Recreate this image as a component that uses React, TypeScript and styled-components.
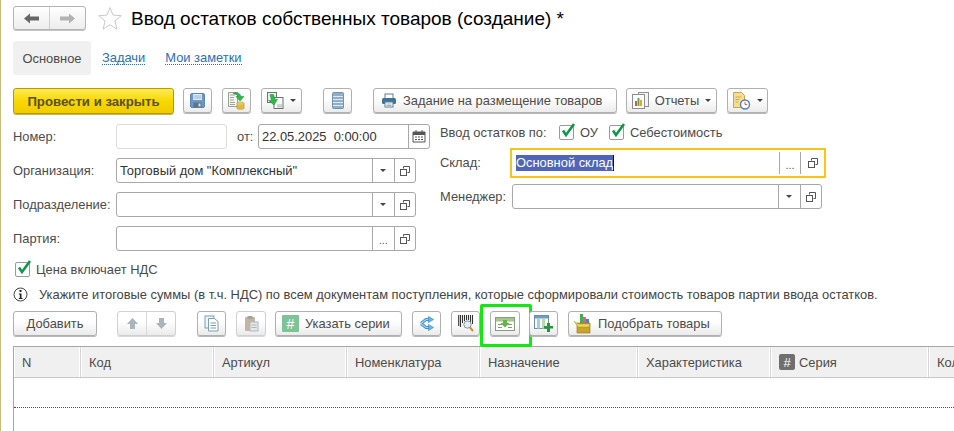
import React from "react";
import styled, { createGlobalStyle } from "styled-components";

const Global = createGlobalStyle`
  html, body { margin: 0; padding: 0; background: #fff; }
  body { font-family: "Liberation Sans", Arial, sans-serif; font-size: 12.9px; color: #4b4b4b; }
`;
const Page = styled.div`display:flex;width:954px;height:431px;overflow:hidden;background:#fff;`;
const Strip = styled.div`width:1px;flex:none;background:#c8b97c;`;
const Content = styled.div`flex:none;width:941px;padding-left:12px;padding-top:6px;box-sizing:content-box;`;
const Header = styled.div`display:flex;align-items:center;height:24px;`;
const NavGroup = styled.div`display:flex;width:73px;height:24px;box-sizing:border-box;border:1px solid #b4b4b4;border-radius:3px;background:linear-gradient(#fff,#ededed);box-shadow:0 1px 0 #c4c4c4;`;
const NavButton = styled.div<{ $sep?: boolean }>`flex:1;display:flex;align-items:center;justify-content:center;${p => p.$sep ? "border-left:1px solid #cfcfcf;" : ""}`;
const StarWrap = styled.div`margin-left:12px;width:24px;height:24px;display:flex;`;
const Title = styled.div`margin-left:9px;padding-top:1px;font-size:19px;color:#000;white-space:nowrap;line-height:24px;`;
const Tabs = styled.div`display:flex;align-items:center;height:34px;margin-top:11px;`;
const ActiveTab = styled.div`width:78px;height:34px;display:flex;align-items:center;justify-content:center;background:#f0f0f0;border-radius:3px;color:#4b4b4b;`;
const TabLink = styled.a<{ $ml: number }>`margin-left:${p => p.$ml}px;color:#2a6fb8;border-bottom:1px dotted #2a6fb8;line-height:13px;`;
const Toolbar = styled.div<{ $mt: number }>`display:flex;align-items:flex-start;height:26px;margin-top:${p => p.$mt}px;`;
const Button = styled.div<{ $w: number; $ml?: number; $off?: boolean; $pl?: number }>`
  flex:none;width:${p => p.$w}px;height:25px;margin-left:${p => p.$ml ?? 0}px;box-sizing:border-box;
  display:flex;align-items:center;justify-content:${p => p.$pl !== undefined ? "flex-start" : "center"};gap:6px;position:relative;
  padding-left:${p => p.$pl ?? 0}px;
  border:1px solid ${p => p.$off ? "#d0d0d0" : "#b0b0b0"};border-radius:3px;
  background:linear-gradient(#fff 40%,#ebebeb);box-shadow:0 1px 0 ${p => p.$off ? "#d8d8d8" : "#b8b8b8"};
  color:#4b4b4b;white-space:nowrap;
`;
const PrimaryButton = styled.div`
  flex:none;width:161px;height:26px;box-sizing:border-box;display:flex;align-items:center;justify-content:center;
  border:1px solid #b59b00;border-radius:3px;background:linear-gradient(#ffe95a,#f8d800 50%,#f0cc00);
  color:#5a5020;font-weight:bold;font-size:13.2px;box-shadow:0 1px 0 #c9b35a;
`;
const Caret = styled.span`width:0;height:0;border-left:3.5px solid transparent;border-right:3.5px solid transparent;border-top:3.5px solid #444;`;
const Form = styled.div`display:flex;margin-top:10px;`;
const LeftCol = styled.div`width:417px;flex:none;display:flex;flex-direction:column;gap:9px;`;
const RightCol = styled.div`margin-left:10px;flex:none;width:400px;display:flex;flex-direction:column;`;
const Row = styled.div`display:flex;align-items:center;height:25px;`;
const Label = styled.div<{ $w?: number; $lift?: boolean }>`flex:none;width:${p => p.$w ?? 103}px;color:#4b4b4b;white-space:nowrap;${p => p.$lift ? "margin-bottom:2px;" : ""}`;
const Field = styled.div<{ $w: number; $ml?: number; $off?: boolean; $focus?: boolean }>`
  flex:none;display:flex;align-items:stretch;box-sizing:border-box;width:${p => p.$w}px;margin-left:${p => p.$ml ?? 0}px;
  height:${p => p.$focus ? 30 : 25}px;background:#fff;border-radius:${p => p.$focus ? 0 : 3}px;
  border:${p => p.$focus ? "2px solid #f6c518" : `1px solid ${p.$off ? "#dcdcdc" : "#a8a8a8"}`};
  ${p => p.$focus ? "padding:2px 0;" : ""}
`;
const FieldText = styled.div`flex:1;display:flex;align-items:center;padding-left:3px;color:#333;white-space:pre;overflow:hidden;`;
const Selected = styled.span`margin-left:1px;background:#4f66b8;color:#fff;line-height:16px;border-right:1px solid #111;`;
const FieldBtn = styled.div<{ $w?: number }>`flex:none;width:${p => p.$w ?? 21.5}px;box-sizing:border-box;display:flex;align-items:center;justify-content:center;border-left:1px solid #a8a8a8;color:#555;`;
const Dots = styled.span`font-size:11px;line-height:11px;position:relative;top:2px;`;
const OtLabel = styled.div`margin-left:10px;width:21px;flex:none;`;
const CheckRow = styled.div`display:flex;align-items:center;height:15px;margin:1px 0 8px;`;
const CheckBox = styled.div<{ $ml?: number }>`position:relative;flex:none;width:15px;height:15px;margin-left:${p => p.$ml ?? 0}px;margin-right:6px;border:1px solid #9a9a9a;border-radius:2px;background:#fff;box-sizing:border-box;`;
const CheckMark = styled.svg`position:absolute;left:0;top:-4px;`;
const SkladRow = styled.div`display:flex;align-items:center;height:30px;margin-bottom:6px;`;
const ManagerRow = styled.div`display:flex;align-items:center;height:25px;`;
const VatRow = styled.div`display:flex;align-items:center;height:16px;margin-top:10px;padding-left:2px;`;
const InfoRow = styled.div`display:flex;align-items:center;height:16px;margin-top:9px;gap:11px;color:#444;white-space:nowrap;`;
const Pair = styled.div<{ $ml: number }>`display:flex;flex:none;width:59px;height:25px;margin-left:${p => p.$ml}px;box-sizing:border-box;border:1px solid #d0d0d0;border-radius:3px;background:linear-gradient(#fff 40%,#ebebeb);box-shadow:0 1px 0 #d8d8d8;`;
const PairPart = styled.div<{ $sep?: boolean }>`flex:1;display:flex;align-items:center;justify-content:center;${p => p.$sep ? "border-left:1px solid #d8d8d8;" : ""}`;
const Highlight = styled.div`position:absolute;left:-11px;top:-8px;width:52px;height:43px;box-sizing:border-box;border:3px solid #16e616;border-radius:2px;pointer-events:none;`;
const Table = styled.div`margin-top:9px;width:990px;border-top:1px solid #a6a6a6;border-left:1px solid #a6a6a6;height:85px;`;
const HeaderRow = styled.div`display:grid;grid-template-columns:67px 133px 133px 133px 158px 133px 158px 100px;height:31px;box-sizing:border-box;border-bottom:1px solid #c8c8c8;`;
const HeadCell = styled.div`display:flex;align-items:center;padding-left:8px;background:#f0f0f0;border-right:1px solid #d6d6d6;box-shadow:inset -1px 0 0 #fff,inset 1px 0 0 #fff;color:#4b4b4b;white-space:nowrap;gap:4px;`;
const HashBadge = styled.span`width:16px;height:16px;border-radius:2px;background:#6f6f6f;color:#fff;display:flex;align-items:center;justify-content:center;font-size:13px;`;
const GreenHash = styled.span`width:17px;height:17px;background:#7fc295;color:#fff;border-radius:1px;display:flex;align-items:center;justify-content:center;font-size:14px;`;
const BlankLine = styled.div`height:29px;border-bottom:1px dotted #e01010;`;

const Back = () => <svg width="15" height="11" viewBox="0 0 15 11"><path d="M0 5.500 6 .5v3h9v4H6v3z" fill="#666" /></svg>;
const Forward = () => <svg width="15" height="11" viewBox="0 0 15 11"><path d="M15 5.500 9 .5v3H0v4h9v3z" fill="#b2b2b2" /></svg>;
const Star = () => <svg width="24" height="24" viewBox="0 0 24 24"><path d="M12 1.500l3 7.600 8.300.6-6.400 5.300 2 8.200L12 18.800 5.100 23.200l2-8.200L.7 9.700 9 9.100z" fill="#fff" stroke="#c9c9c9" /></svg>;
const Save = () => <svg width="15" height="15" viewBox="0 0 15 15"><rect x=".5" y=".5" width="14" height="14" rx="1.500" fill="#6b98c9" stroke="#5a86b6" /><rect x="3" y="1" width="9" height="6" fill="#e3edf6" /><path d="M3.500 3h8M3.500 5h8" stroke="#8fb0d0" /><rect x="3.500" y="9.500" width="8" height="5" fill="#5e7387" /><rect x="8.500" y="10.500" width="2" height="3" fill="#d5dde5" /></svg>;
const PostIcon = () => <svg width="17" height="18" viewBox="0 0 17 18"><path d="M.5.500h9v14h-9z" fill="#f4f5ee" stroke="#9a9f92" /><path d="M2 3h5M2 5.500h4M2 8h4M2 10.500h5M2 12.500h5" stroke="#9ca39a" /><ellipse cx="12.500" cy="11.500" rx="3.500" ry="1.500" fill="#f1d35d" stroke="#b8952b" strokeWidth=".7" /><path d="M9 11.500v5c0 1 7 1 7 0v-5" fill="#eac74a" stroke="#b8952b" strokeWidth=".7" /><path d="M9 13.800h7M9 15.500h7" stroke="#c9a53a" strokeWidth=".6" /><path d="M5 1.500c4-1.500 7-.5 8 3h3l-4 4.500-4-4.500h2c-.5-1.500-2-2.500-5-3z" fill="#2eb84c" stroke="#1d8b36" strokeWidth=".5" /></svg>;
const CopyDown = () => <svg width="17" height="17" viewBox="0 0 17 17"><rect x=".5" y=".5" width="9" height="10" fill="#e8f0ea" stroke="#66766c" /><rect x="7" y="5.500" width="9" height="11" fill="#fafafa" stroke="#66766c" /><path d="M10 13h5M10 14.800h5" stroke="#a8b2ac" /><path d="M3 2.500h3.500l1.500 5h2.500L7 13 1.500 8.500l3 .0z" fill="#2eb84c" stroke="#1d8b36" strokeWidth=".5" /></svg>;
const Lines = () => <svg width="12" height="17" viewBox="0 0 12 17"><rect x=".5" y=".5" width="11" height="16" rx="1" fill="#8fb0c8" stroke="#7393aa" /><path d="M1 4.500h10M1 7.500h10M1 10.500h10M1 13.500h10" stroke="#dce7ee" /></svg>;
const Printer = () => <svg width="16" height="15" viewBox="0 0 16 15"><rect x="4" y="1" width="8" height="5" fill="#fff" stroke="#5f7f97" /><rect x="1" y="5" width="14" height="6" rx="1.500" fill="#3f7396" /><rect x="4" y="9" width="8" height="5" fill="#fff" stroke="#5f7f97" /><path d="M5.500 11h5M5.500 12.500h5" stroke="#9db0bf" /></svg>;
const Reports = () => <svg width="17" height="17" viewBox="0 0 17 17"><rect x="6.500" y=".5" width="10" height="14" fill="#f4f4f4" stroke="#8f8f8f" /><rect x=".5" y="2.500" width="12" height="14" fill="#fff" stroke="#8f8f8f" /><rect x="3" y="9" width="2" height="5" fill="#d9534f" /><rect x="5.500" y="6" width="2" height="8" fill="#4caf50" /><rect x="8" y="8" width="2" height="6" fill="#e3a82b" /></svg>;
const DocClock = () => <svg width="18" height="18" viewBox="0 0 18 18"><path d="M.5.500h8l3 3v12H.5z" fill="#f7dd92" stroke="#c7a54e" /><path d="M2.500 5h6M2.500 7.500h4M2.500 10h3" stroke="#c9ab5c" /><circle cx="12" cy="12.500" r="4.500" fill="#fff" stroke="#4f7fb5" strokeWidth="1.400" /><path d="M12 10v2.500h2" stroke="#d9534f" fill="none" /></svg>;
const Calendar = () => <svg width="14" height="13" viewBox="0 0 14 13"><path d="M1 2h12v10H1z" fill="#fff" stroke="#555" /><path d="M1 2h12v3H1z" fill="#555" /><path d="M4 0v3M10 0v3" stroke="#555" /><path d="M3 7h2M6 7h2M9 7h2M3 9.500h2M6 9.500h2M9 9.500h2" stroke="#555" /></svg>;
const OpenIcon = () => <svg width="10" height="10" viewBox="0 0 10 10" fill="none" stroke="#555"><path d="M3.500 2.500v-2h6v6h-2" /><rect x=".5" y="3.500" width="6" height="6" fill="#fff" /></svg>;
const Check = () => <CheckMark width="17" height="17" viewBox="0 0 17 17"><path d="M3 8.500l3 4.500L14 2" fill="none" stroke="#12964a" strokeWidth="2.600" /></CheckMark>;
const Info = () => <svg width="15" height="15" viewBox="0 0 15 15"><circle cx="7.500" cy="7.500" r="6.500" fill="#fff" stroke="#444" /><rect x="6.500" y="3" width="2" height="2" fill="#222" /><path d="M5.800 6.500h2.700v4.500h1v1H5.800v-1h1V7.500h-1z" fill="#222" /></svg>;
const ArrowUp = () => <svg width="13" height="13" viewBox="0 0 13 13"><path d="M6.500 1 12 7H9v5H4V7H1z" fill="#a9b4bb" /></svg>;
const ArrowDown = () => <svg width="13" height="13" viewBox="0 0 13 13"><path d="M6.500 12 12 6H9V1H4v5H1z" fill="#a9b4bb" /></svg>;
const CopyDoc = () => <svg width="15" height="17" viewBox="0 0 15 17"><rect x="1" y="1" width="9" height="12" fill="#eef5f9" stroke="#7b9fb3" /><path d="M4.500 3.500h6l3.500 3v9.500H4.500z" fill="#fff" stroke="#7b9fb3" /><path d="M6.500 8h5.500M6.500 10.500h5.500M6.500 13h5.500" stroke="#7b9fb3" /></svg>;
const Paste = () => <svg width="15" height="17" viewBox="0 0 15 17"><rect x="1" y="2" width="10" height="14" rx="1" fill="#c4b5a7" /><rect x="3.500" y="1" width="5" height="3" fill="#a9a09a" /><rect x="6" y="7" width="8" height="9" fill="#e4e8ea" stroke="#b0b6ba" /><path d="M7.500 10h5M7.500 12.500h5" stroke="#b0b6ba" /></svg>;
const Branch = () => <svg width="15" height="15" viewBox="0 0 15 15"><path d="M2 7.500 7 3.500h3M2 7.500l5 4h3" fill="none" stroke="#3f8fc8" strokeWidth="3" /><path d="M2 7.500 7 3.500h3M2 7.500l5 4h3" fill="none" stroke="#a7d3ef" strokeWidth="1.200" /><path d="M9.500 .5 14.500 3.500 9.500 6.500zM9.500 8.500l5 3-5 3z" fill="#6db4e3" stroke="#3f8fc8" strokeWidth=".7" /></svg>;
const Barcode = () => <svg width="16" height="17" viewBox="0 0 16 17"><path d="M.7 0v11M2.500 0v12M4.500 0v8M6.500 0v6M8.500 0v5M10.500 0v5M12.500 0v7M14.500 0v9" stroke="#333" strokeWidth="1.100" /><circle cx="9.500" cy="9.500" r="3.700" fill="#e3ecf2" stroke="#8a8f92" /><path d="M12 12.500 15 16" stroke="#c98f3e" strokeWidth="2" /></svg>;
const RowDown = () => <svg width="20" height="14" viewBox="0 0 20 14"><rect x=".5" y=".5" width="19" height="13" fill="#fbfdf8" stroke="#8c9a82" /><rect x="1" y="1" width="18" height="3.500" fill="#a3c98a" /><path d="M3 7.500h4M3 10.500h4M13 7.500h4M13 10.500h4" stroke="#8a948a" /><path d="M8 3h4v3h2.500L10 10.500 5.500 6H8z" fill="#66b34f" /></svg>;
const TablePlus = () => <svg width="19" height="17" viewBox="0 0 19 17"><rect x=".5" y=".5" width="14" height="13" fill="#f6fafc" stroke="#6f8fa8" /><rect x="1" y="1" width="13" height="2.500" fill="#6f9fc0" /><rect x="3" y="3.500" width="3" height="10" fill="#a8cde0" /><rect x="8" y="3.500" width="3" height="10" fill="#bcd7a8" /><path d="M13 8h3v3h3v2.500h-3v3.500h-3v-3.500h-3V11h3z" fill="#1f9a3a" /></svg>;
const Box = () => <svg width="18" height="20" viewBox="0 0 18 20"><rect x="6" y="0" width="3" height="10" fill="#3fb24a" /><rect x="9" y="3" width="3" height="7" fill="#e0608a" /><rect x="12" y="5" width="3" height="5" fill="#4f7fc5" /><path d="M3 9h13v10H3z" fill="#c9a42a" stroke="#8f7418" strokeWidth=".6" /><path d="M0 7l4 3h12l-1 3H4z" fill="#f0d95f" stroke="#a98a1e" strokeWidth=".5" /></svg>;

const Fld = ({ w, text, kind, ml }: { w: number; text?: string; kind: "select" | "pick"; ml?: number }) => (
  <Field $w={w} $ml={ml}>
    <FieldText>{text}</FieldText>
    <FieldBtn>{kind === "select" ? <Caret /> : <Dots>...</Dots>}</FieldBtn>
    <FieldBtn><OpenIcon /></FieldBtn>
  </Field>
);

const columns = ["N", "Код", "Артикул", "Номенклатура", "Назначение", "Характеристика"];

export default function App() {
  return (
    <Page>
      <Global />
      <Strip />
      <Content>
        <Header>
          <NavGroup>
            <NavButton><Back /></NavButton>
            <NavButton $sep><Forward /></NavButton>
          </NavGroup>
          <StarWrap><Star /></StarWrap>
          <Title>Ввод остатков собственных товаров (создание) *</Title>
        </Header>
        <Tabs>
          <ActiveTab>Основное</ActiveTab>
          <TabLink $ml={11}>Задачи</TabLink>
          <TabLink $ml={20}>Мои заметки</TabLink>
        </Tabs>
        <Toolbar $mt={13}>
          <PrimaryButton>Провести и закрыть</PrimaryButton>
          <Button $w={29} $ml={9}><Save /></Button>
          <Button $w={29} $ml={10}><PostIcon /></Button>
          <Button $w={41} $ml={10}><CopyDown /><Caret /></Button>
          <Button $w={29} $ml={21}><Lines /></Button>
          <Button $w={244} $ml={21} $pl={7}><Printer />Задание на размещение товаров</Button>
          <Button $w={91} $ml={9}><Reports />Отчеты<Caret /></Button>
          <Button $w={41} $ml={10}><DocClock /><Caret /></Button>
        </Toolbar>
        <Form>
          <LeftCol>
            <Row>
              <Label>Номер:</Label>
              <Field $w={111} $off />
              <OtLabel>от:</OtLabel>
              <Field $w={172}>
                <FieldText>{"22.05.2025  0:00:00"}</FieldText>
                <FieldBtn><Calendar /></FieldBtn>
              </Field>
            </Row>
            <Row><Label>Организация:</Label><Fld w={300} text={'Торговый дом "Комплексный"'} kind="select" /></Row>
            <Row><Label>Подразделение:</Label><Fld w={300} kind="select" /></Row>
            <Row><Label>Партия:</Label><Fld w={300} kind="pick" /></Row>
          </LeftCol>
          <RightCol>
            <CheckRow>
              <Label $w={119}>Ввод остатков по:</Label>
              <CheckBox><Check /></CheckBox>ОУ
              <CheckBox $ml={11}><Check /></CheckBox>Себестоимость
            </CheckRow>
            <SkladRow>
              <Label $w={70} $lift>Склад:</Label>
              <Field $w={316} $focus>
                <FieldText><Selected>Основной склад</Selected></FieldText>
                <FieldBtn $w={21}><Dots>...</Dots></FieldBtn>
                <FieldBtn $w={24}><OpenIcon /></FieldBtn>
              </Field>
            </SkladRow>
            <ManagerRow>
              <Label $w={72}>Менеджер:</Label>
              <Fld w={310} kind="select" />
            </ManagerRow>
          </RightCol>
        </Form>
        <VatRow><CheckBox><Check /></CheckBox>Цена включает НДС</VatRow>
        <InfoRow>
          <Info />
          Укажите итоговые суммы (в т.ч. НДС) по всем документам поступления, которые сформировали стоимость товаров партии ввода остатков.
        </InfoRow>
        <Toolbar $mt={9}>
          <Button $w={84}>Добавить</Button>
          <Pair $ml={20}>
            <PairPart><ArrowUp /></PairPart>
            <PairPart $sep><ArrowDown /></PairPart>
          </Pair>
          <Button $w={29} $ml={21}><CopyDoc /></Button>
          <Button $w={30} $ml={10} $off><Paste /></Button>
          <Button $w={127} $ml={9} $pl={6}><GreenHash>#</GreenHash>Указать серии</Button>
          <Button $w={29} $ml={10}><Branch /></Button>
          <Button $w={29} $ml={10}><Barcode /></Button>
          <Button $w={30} $ml={10}><RowDown /><Highlight /></Button>
          <Button $w={29} $ml={9}><TablePlus /></Button>
          <Button $w={154} $ml={10} $pl={5}><Box />Подобрать товары</Button>
        </Toolbar>
        <Table>
          <HeaderRow>
            {columns.map(c => <HeadCell key={c}>{c}</HeadCell>)}
            <HeadCell><HashBadge>#</HashBadge>Серия</HeadCell>
            <HeadCell>Количество</HeadCell>
          </HeaderRow>
          <BlankLine />
        </Table>
      </Content>
    </Page>
  );
}
